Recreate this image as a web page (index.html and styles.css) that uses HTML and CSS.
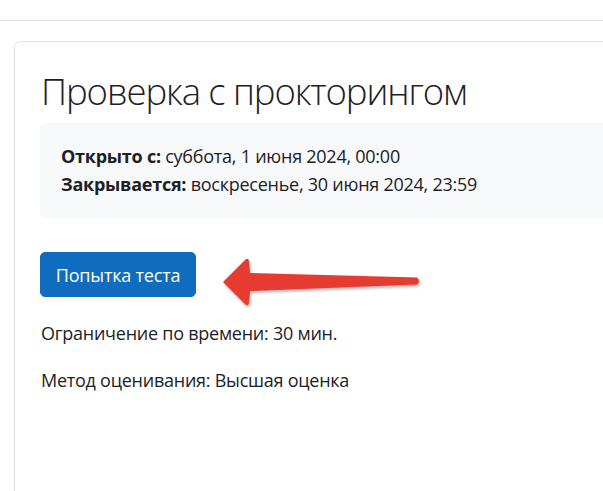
FILE: index.html
```html
<!DOCTYPE html>
<html lang="ru">
<head>
<meta charset="utf-8">
<link rel="stylesheet" href="styles.css">
</head>
<body>
<div class="topbar"></div>
<div class="card">
  <h1 class="title">Проверка с прокторингом</h1>
  <div class="dates">
    <div class="date"><strong>Открыто с:</strong> суббота, 1 июня 2024, 00:00</div>
    <div class="date"><strong>Закрывается:</strong> воскресенье, 30 июня 2024, 23:59</div>
  </div>
  <div class="action">
    <button class="btn">Попытка теста</button>
    <svg class="arrow" width="215" height="62" viewBox="0 0 215 62">
      <path d="M9 32 L31 10 Q34 7 35 11 L36 23 L203 27.5 Q207 31 203 34.5 L36 41 L35 53 Q34 57 31 54 Z" fill="#e53b30"/>
    </svg>
  </div>
  <p class="info first">Ограничение по времени: 30 мин.</p>
  <p class="info second">Метод оценивания: Высшая оценка</p>
</div>
</body>
</html>
```
FILE: styles.css
```css
html, body {
  margin: 0;
  padding: 0;
  background: #fff;
  overflow: hidden;
}
body {
  font-family: "Open Sans", "Noto Sans", sans-serif;
  font-size: 18px;
  color: #1d2125;
  width: 603px;
  height: 491px;
}
.topbar {
  height: 20px;
  border-bottom: 1px solid #dee2e6;
}
.card {
  margin: 20px -60px 0 14px;
  border: 1px solid #dee2e6;
  border-radius: 6px;
  padding: 27px 25px 0 25px;
  height: 500px;
}
.title {
  margin: 0 0 10px 1px;
  font-size: 36.5px;
  font-weight: 300;
  line-height: 44px;
  letter-spacing: -1.1px;
}
.dates {
  background: #f8f9fa;
  border-radius: 6px;
  padding: 20px 21px 21px;
}
.date {
  line-height: 27.5px;
  letter-spacing: -0.25px;
}
.date strong {
  font-weight: 700;
}
.action {
  position: relative;
  margin-top: 33px;
  height: 45px;
}
.btn {
  font-family: inherit;
  font-size: 18px;
  color: #fff;
  background: #0f6cbf;
  border: 1px solid #0f6cbf;
  border-radius: 5px;
  height: 45px;
  width: 156px;
  padding: 0;
  letter-spacing: -0.2px;
}
.arrow {
  position: absolute;
  left: 174px;
  top: -2px;
  filter: drop-shadow(1px 2px 1.5px rgba(0,0,0,0.3));
}
.info {
  margin: 0 0 0 1px;
  line-height: 27px;
  letter-spacing: -0.25px;
}
.info.first {
  margin-top: 22.5px;
}
.info.second {
  margin-top: 20px;
}
```
